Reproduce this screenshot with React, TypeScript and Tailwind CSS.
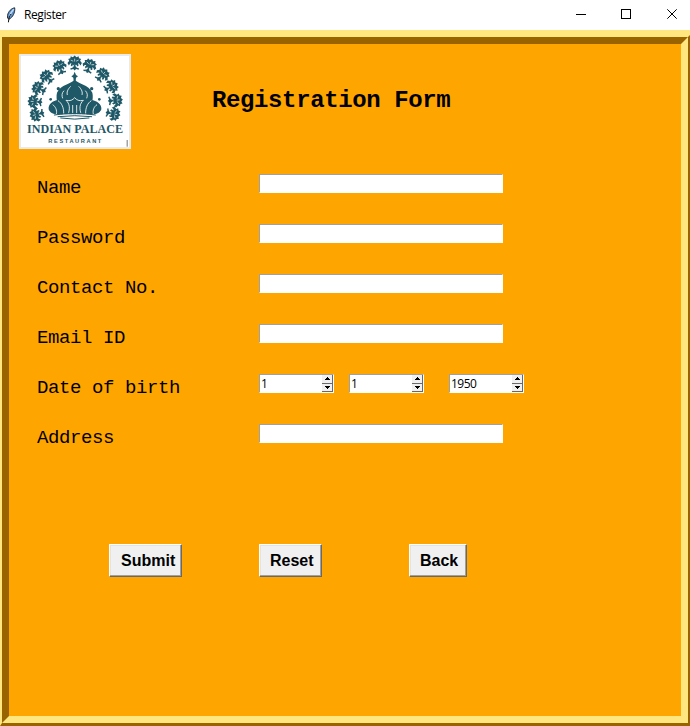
import React from "react";

const mono = "font-['Liberation_Mono','Courier_New',monospace]";
const ui = "font-['Open_Sans','Noto_Sans',sans-serif]";

const palms = [
  [82, 208, -104], [76, 170, -86], [88, 131, -63], [112, 97, -43], [150, 68, -22], [194, 55, 0],
  [238, 64, 20], [276, 91, 42], [302, 126, 62], [315, 166, 84], [308, 206, 102],
];

function Palm({ x, y, r }: { x: number; y: number; r: number }) {
  return (
    <g transform={`translate(${x} ${y}) rotate(${r}) scale(1.08)`}>
      <path d="M0 -22L5 -17L11 -20L12 -14L18 -12L15 -7L20 -1L16 6L13 1L9 -1L11 6L7 9L5 3L3 8L8 13L12 14L11 18L4 16L0 20L-4 16L-11 18L-12 14L-8 13L-3 8L-5 3L-7 9L-11 6L-9 -1L-13 1L-16 6L-20 -1L-15 -7L-18 -12L-12 -14L-11 -20L-5 -17Z" />
      <path d="M0 -13V-5M-11 -9L-4 -6M11 -9L4 -6M-2 4L-6 12M2 4L6 12" stroke="#fff" strokeWidth="1.800" fill="none" />
    </g>
  );
}

function Logo() {
  return (
    <svg className="block h-[95px] w-[112px]" viewBox="27 27 336 285" fill="#1f5866">
      <rect x="27" y="27" width="336" height="285" fill="#e9eaec" />
      <rect x="33" y="33" width="324" height="273" fill="#fff" />
      {palms.map(([x, y, r]) => <Palm key={`${x}-${y}`} x={x} y={y} r={r} />)}
      <path d="M194 80L198 90L204 94L198 98L197 108H191L190 98L184 94L190 90Z" />
      <path d="M194 104C203 116 236 118 247 143C252 162 242 190 235 208H153C146 190 136 162 141 143C152 118 185 116 194 104Z" />
      <path d="M145 165C128 166 114 178 116 193C118 201 128 207 138 208H158ZM243 165C260 166 276 178 274 193C272 201 262 207 252 208H230Z" />
      <circle cx="145" cy="131" r="5" /><circle cx="245" cy="131" r="5" />
      <circle cx="122" cy="163" r="4" /><circle cx="268" cy="163" r="4" />
      <g fill="none" stroke="#fff" strokeWidth="2.500">
        <path d="M182 124C172 134 170 142 172 150M206 124C216 134 218 142 216 150M162 137C155 144 155 152 158 160M226 137C233 144 233 152 230 160" />
        <path d="M174 209C181 190 179 176 168 166C181 169 188 165 194 158C200 165 207 169 220 166C209 176 207 190 214 209M188 209V180M200 209V180" />
        <path d="M161 208C162 188 155 174 144 167M227 208C226 188 233 174 244 167M139 207C142 196 136 184 128 179M250 207C247 196 253 184 261 179" />
      </g>
      <g fill="none" stroke="#1f5866" strokeLinecap="round">
        <path d="M133 210Q194 200 256 210" strokeWidth="3" />
        <path d="M144 215Q194 209 245 215" strokeWidth="3" />
        <path d="M152 219Q194 226 237 219" strokeWidth="3" />
      </g>
      <text x="51" y="263" textLength="288" lengthAdjust="spacingAndGlyphs" fontFamily="Liberation Serif, serif" fontWeight="700" fontSize="36">INDIAN PALACE</text>
      <text x="115" y="293" textLength="159" lengthAdjust="spacing" fontFamily="Liberation Sans, sans-serif" fontWeight="700" fontSize="17">RESTAURANT</text>
      <rect x="350" y="285" width="3" height="20" fill="#777" />
    </svg>
  );
}

function Feather() {
  return (
    <svg className="h-4 w-[10px]" viewBox="0 0 10 16">
      <path d="M8.7.8C5.500 1.200 2.200 4.400 1.500 8.500L1.600 11.200L3 12.300C6.800 10.300 9.300 5.500 8.700.8Z" fill="#5b93cf" stroke="#171e29" strokeWidth=".9" />
      <path d="M7.700 2.300C5.500 4.500 4 7.300 3.500 10" stroke="#c7def5" strokeWidth="1.300" fill="none" />
      <path d="M5 7C3.700 9 2.700 11 2.400 15.300" stroke="#111" strokeWidth="1" fill="none" />
    </svg>
  );
}

const field = "h-[19px] rounded-none border border-t-[#a0a0a0] border-l-[#a0a0a0] border-r-white border-b-white bg-white outline-none";

function Arrow({ down = false }: { down?: boolean }) {
  return (
    <span className="flex h-[8.500px] w-[11px] items-center justify-center border-r border-b border-[#696969] bg-[#f0f0f0]">
      <svg className="h-[3px] w-[5px]" viewBox="0 0 5 3" shapeRendering="crispEdges">
        <path d={down ? "M0 0H5V1H4V2H3V3H2V2H1V1H0Z" : "M2 0H3V1H4V2H5V3H0V2H1V1H2Z"} />
      </svg>
    </span>
  );
}

function Spin({ value }: { value: string }) {
  return (
    <div className={`${field} ${ui} flex w-[75px] justify-between pl-px text-[12px] leading-[17px] text-black`}>
      <span className="tracking-[-0.5px]">{value}</span>
      <span className="flex h-[17px] flex-col"><Arrow /><Arrow down /></span>
    </div>
  );
}

function Row({ label, children }: { label: string; children?: React.ReactNode }) {
  return (
    <div className="flex h-[50px] items-start">
      <label className={`${mono} w-[222px] shrink-0 pt-[3px] text-[19px] leading-[22px] tracking-[-0.400px] whitespace-pre text-black`}>{label}</label>
      {children ?? <input aria-label={label} className={`${field} w-[244px]`} />}
    </div>
  );
}

const button = "h-[33px] border border-t-white border-l-white border-r-[#696969] border-b-[#696969] bg-[#f0f0f0] text-left font-['Liberation_Sans',Arial,sans-serif] text-[16px] leading-[30px] font-bold text-black shadow-[inset_-1px_-1px_0_#a0a0a0,inset_1px_1px_0_#e3e3e3]";

export default function App() {
  return (
    <div className="flex h-[726px] w-[690px] flex-col overflow-hidden bg-white">
      <header className="flex h-[30px] shrink-0 items-center pl-[6px]">
        <Feather />
        <span className={`${ui} ml-2 text-[12px] tracking-[-0.400px] text-black`}>Register</span>
        <svg className="ml-auto h-[30px] w-[130px]" viewBox="0 0 130 30" fill="none" stroke="#000">
          <path d="M16 14.500H26M61.500 9.500H70.500V18.500H61.500Z" shapeRendering="crispEdges" />
          <path d="M107.300 9.300L116.700 18.700M116.700 9.300L107.300 18.700" />
        </svg>
      </header>
      <div className="flex min-h-0 flex-1 bg-[#ffe67f] pt-[5px]">
        <div className="flex flex-1 border-2 border-b-[3px] border-t-[#ffe67f] border-l-[#ffe67f] border-r-[#996300] border-b-[#996300]">
          <main className="flex flex-1 flex-col border-7 border-t-[#996300] border-l-[#996300] border-r-[#ffe67f] border-b-[#ffe67f] bg-[#ffa500]">
            <div className="flex pt-[10px] pl-[10px]">
              <Logo />
              <h1 className={`${mono} mt-[33px] ml-[81px] text-[24px] leading-[28px] font-bold tracking-[-0.380px] text-black`}>Registration Form</h1>
            </div>
            <form className="flex flex-col pt-[25px] pl-[28px]">
              <Row label="Name" />
              <Row label="Password" />
              <Row label="Contact No." />
              <Row label="Email ID" />
              <Row label="Date of birth">
                <Spin value="1" />
                <div className="ml-[15px]"><Spin value="1" /></div>
                <div className="ml-[25px]"><Spin value="1950" /></div>
              </Row>
              <Row label="Address" />
              <div className="mt-[70px] ml-[72px] flex">
                <button type="button" className={`${button} w-[73px] pl-[11px]`}>Submit</button>
                <button type="button" className={`${button} ml-[77px] w-[63px] pl-[10px]`}>Reset</button>
                <button type="button" className={`${button} ml-[87px] w-[58px] pl-[10px]`}>Back</button>
              </div>
            </form>
          </main>
        </div>
      </div>
    </div>
  );
}
